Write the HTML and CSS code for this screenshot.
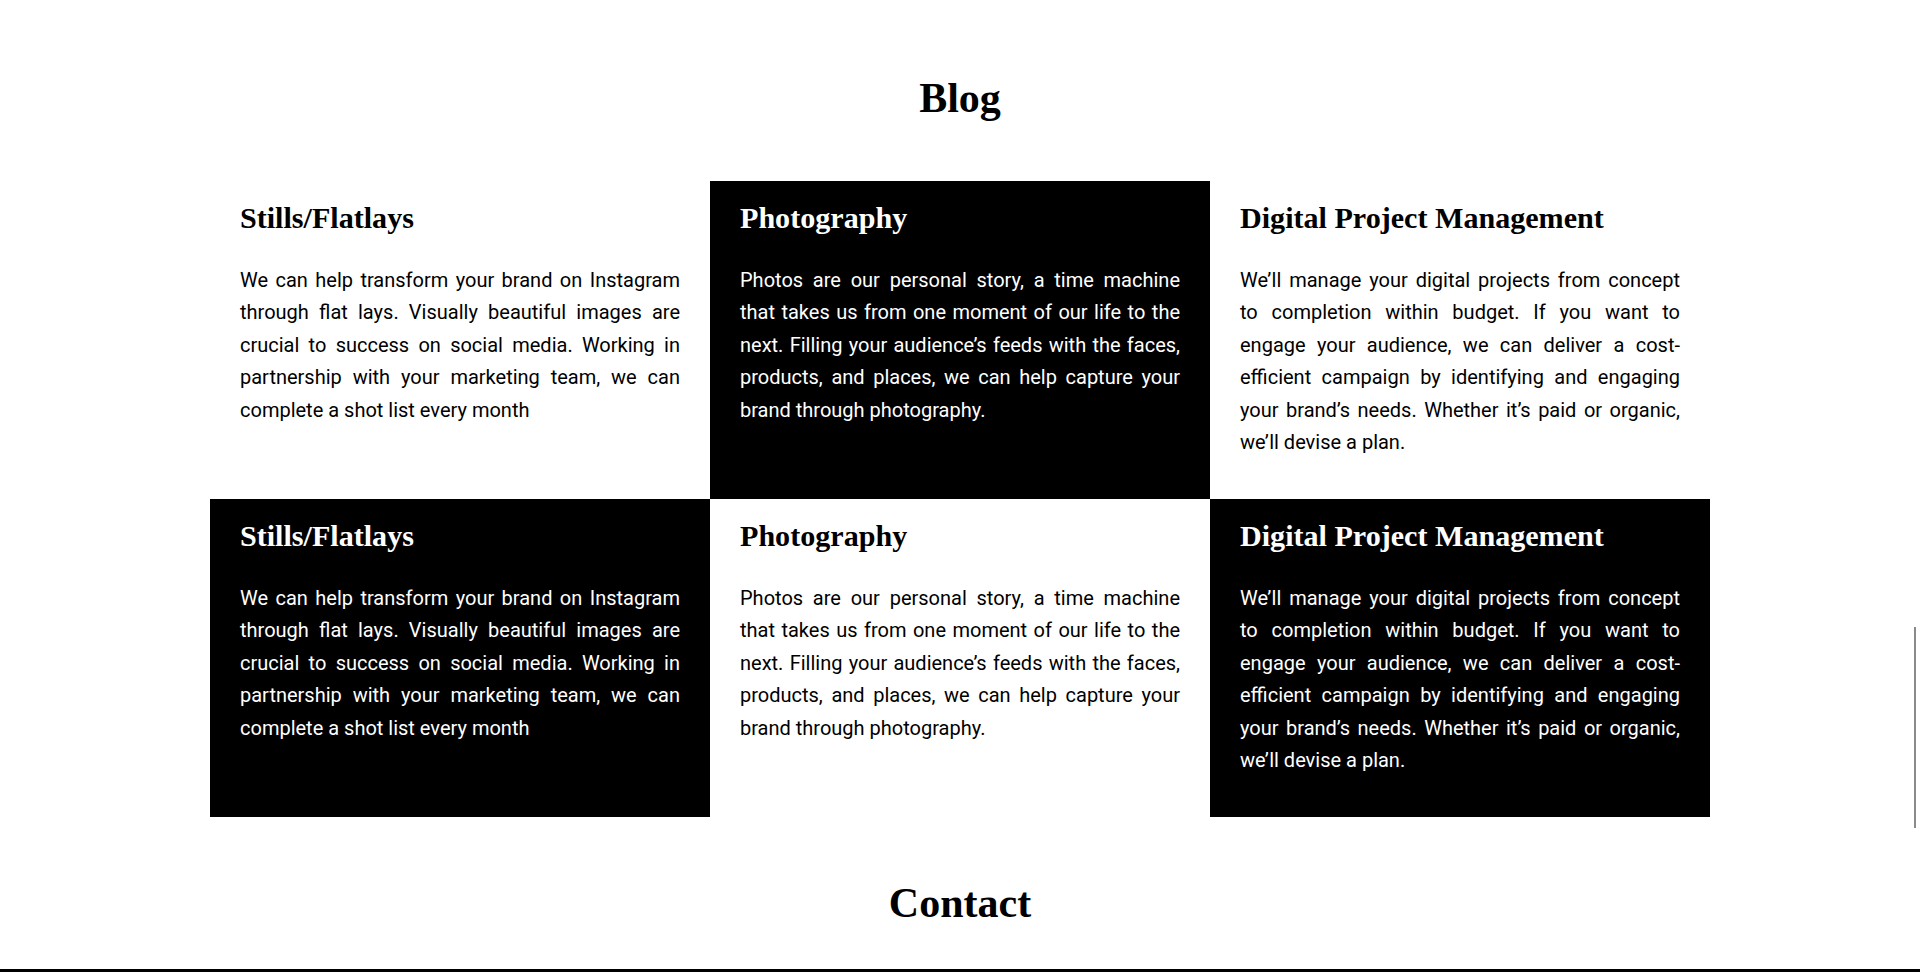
FILE: index.html
```html
<!DOCTYPE html>
<html lang="en">
<head>
<meta charset="utf-8">
<title>Blog</title>
<link rel="stylesheet" href="styles.css">
</head>
<body>
<main class="page">
  <section class="blog">
    <h2 class="section-title">Blog</h2>
    <div class="grid">
      <article class="card">
        <h3 class="card-title">Stills/Flatlays</h3>
        <p class="card-text">We can help transform your brand on Instagram through flat lays. Visually beautiful images are crucial to success on social media. Working in partnership with your marketing team, we can complete a shot list every month</p>
      </article>
      <article class="card card-dark">
        <h3 class="card-title">Photography</h3>
        <p class="card-text">Photos are our personal story, a time machine that takes us from one moment of our life to the next. Filling your audience’s feeds with the faces, products, and places, we can help capture your brand through photography.</p>
      </article>
      <article class="card">
        <h3 class="card-title">Digital Project Management</h3>
        <p class="card-text">We’ll manage your digital projects from concept to completion within budget. If you want to engage your audience, we can deliver a cost-efficient campaign by identifying and engaging your brand’s needs. Whether it’s paid or organic, we’ll devise a plan.</p>
      </article>
      <article class="card card-dark">
        <h3 class="card-title">Stills/Flatlays</h3>
        <p class="card-text">We can help transform your brand on Instagram through flat lays. Visually beautiful images are crucial to success on social media. Working in partnership with your marketing team, we can complete a shot list every month</p>
      </article>
      <article class="card">
        <h3 class="card-title">Photography</h3>
        <p class="card-text">Photos are our personal story, a time machine that takes us from one moment of our life to the next. Filling your audience’s feeds with the faces, products, and places, we can help capture your brand through photography.</p>
      </article>
      <article class="card card-dark">
        <h3 class="card-title">Digital Project Management</h3>
        <p class="card-text">We’ll manage your digital projects from concept to completion within budget. If you want to engage your audience, we can deliver a cost-efficient campaign by identifying and engaging your brand’s needs. Whether it’s paid or organic, we’ll devise a plan.</p>
      </article>
    </div>
  </section>
  <section class="contact">
    <h2 class="section-title">Contact</h2>
  </section>
  <footer class="footer"></footer>
</main>
<div class="scroll-indicator"></div>
</body>
</html>
```
FILE: styles.css
```css
html, body {
  margin: 0;
  padding: 0;
  background: #fff;
  color: #000;
}

body {
  font-family: Roboto, "Liberation Sans", sans-serif;
  height: 972px;
  overflow: hidden;
}

.page {
  display: flex;
  flex-direction: column;
}

.blog {
  padding-top: 73px;
  display: flex;
  flex-direction: column;
  align-items: center;
}

.section-title {
  margin: 0;
  font-family: "Liberation Serif", "Times New Roman", serif;
  font-weight: 700;
  font-size: 42px;
  line-height: 50px;
  text-align: center;
  color: #000;
}

.blog .section-title {
  margin-bottom: 58px;
}

.grid {
  width: 1500px;
  display: grid;
  grid-template-columns: repeat(3, 500px);
}

.card {
  padding: 19px 30px 40.6px;
  background: #fff;
  color: #000;
}

.card-dark {
  background: #000;
  color: #fff;
}

.card-title {
  margin: 0 0 28px;
  font-family: "Liberation Serif", "Times New Roman", serif;
  font-weight: 700;
  font-size: 30.1px;
  line-height: 36px;
}

.card-text {
  margin: 0;
  font-size: 20px;
  line-height: 32.4px;
  text-align: justify;
}

.contact {
  padding-top: 61px;
  padding-bottom: 41px;
  display: flex;
  justify-content: center;
}

.footer {
  height: 40px;
  background: #000;
}

.scroll-indicator {
  position: fixed;
  top: 627px;
  right: 4px;
  width: 2px;
  height: 201px;
  background: #8a8a8a;
}
```
